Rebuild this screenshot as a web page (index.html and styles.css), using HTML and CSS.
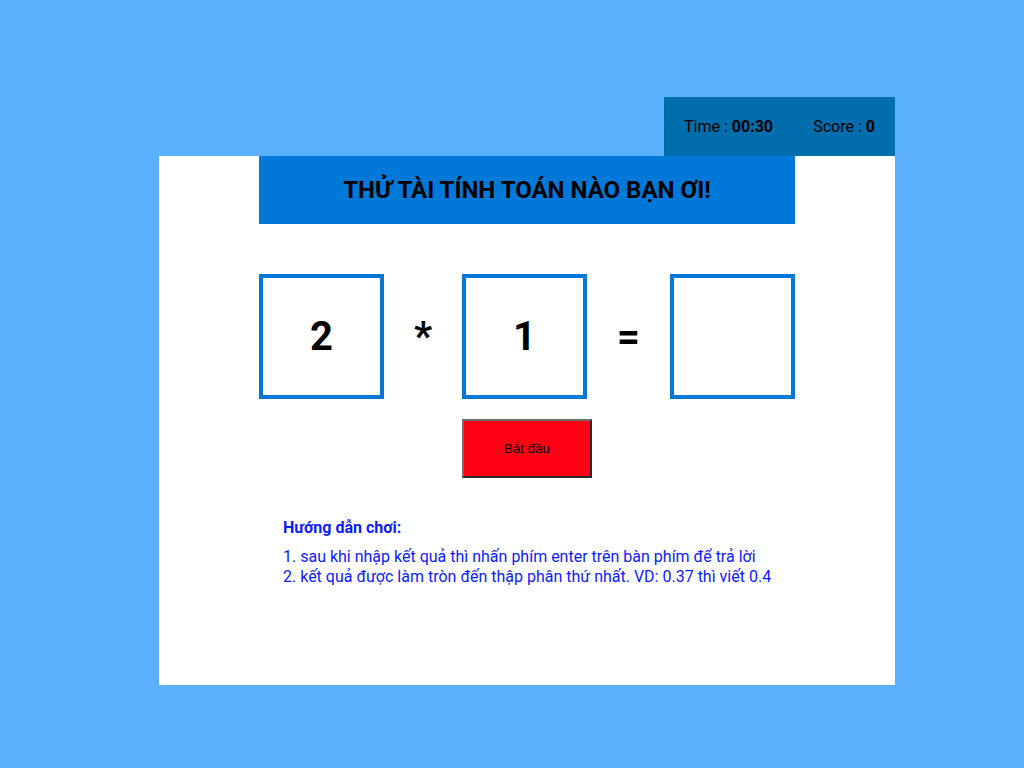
FILE: index.html
```html
<!DOCTYPE html>
<html lang="vi">
<head>
<meta charset="utf-8">
<link rel="stylesheet" href="styles.css">
</head>
<body>
<div class="app">
  <div class="topbar">
    <div class="stats">
      <span>Time : <b>00:30</b></span>
      <span>Score : <b>0</b></span>
    </div>
  </div>
  <div class="panel">
    <h1 class="title">THỬ TÀI TÍNH TOÁN NÀO BẠN ƠI!</h1>
    <div class="equation">
      <div class="box">2</div>
      <div class="op">*</div>
      <div class="box">1</div>
      <div class="op">=</div>
      <div class="box"></div>
    </div>
    <div class="actions">
      <button class="start">Bắt đầu</button>
    </div>
    <div class="guide">
      <div class="guide-title">Hướng dẫn chơi:</div>
      <div class="guide-text">1. sau khi nhập kết quả thì nhấn phím enter trên bàn phím để trả lời<br>2. kết quả được làm tròn đến thập phân thứ nhất. VD: 0.37 thì viết 0.4</div>
    </div>
  </div>
</div>
</body>
</html>
```
FILE: styles.css
```css
html, body {
  margin: 0;
  padding: 0;
  background: #5bb0fd;
  font-family: Roboto, "Noto Sans", sans-serif;
}
.app {
  width: 736px;
  margin-left: 159px;
  padding-top: 97px;
}
.topbar {
  display: flex;
  justify-content: flex-end;
}
.stats {
  width: 231px;
  height: 59px;
  box-sizing: border-box;
  background: #006dac;
  display: flex;
  align-items: center;
  justify-content: space-between;
  padding: 0 20px 0 20px;
  font-size: 16px;
  color: #000;
}
.panel {
  background: #fff;
  height: 529px;
  padding: 0 100px;
  box-sizing: border-box;
}
.title {
  margin: 0;
  height: 68px;
  background: #0078d7;
  display: flex;
  align-items: center;
  justify-content: center;
  font-size: 24px;
  font-weight: 700;
  color: #000;
}
.equation {
  margin-top: 50px;
  display: grid;
  grid-template-columns: 125px 78px 125px 83px 125px;
  align-items: center;
}
.box {
  width: 125px;
  height: 125px;
  box-sizing: border-box;
  border: 4px solid #0078d7;
  display: flex;
  align-items: center;
  justify-content: center;
  font-size: 40px;
  font-weight: 700;
}
.op {
  text-align: center;
  font-size: 40px;
  font-weight: 700;
}
.actions {
  margin-top: 20px;
  display: flex;
  justify-content: center;
}
.start {
  width: 130px;
  height: 59px;
  background: #ff0014;
  border-width: 2px;
  border-style: solid;
  border-color: #6f6f6f #2a2a2a #2a2a2a #6f6f6f;
  font-family: "Liberation Sans", Arial, sans-serif;
  font-size: 13.33px;
  color: #000;
  padding: 0;
}
.guide {
  margin-top: 40px;
  padding-left: 24px;
  color: #0b1bff;
}
.guide-title {
  font-weight: 700;
  font-size: 16px;
  line-height: 20px;
}
.guide-text {
  margin-top: 9px;
  font-size: 16px;
  line-height: 20px;
}
```
